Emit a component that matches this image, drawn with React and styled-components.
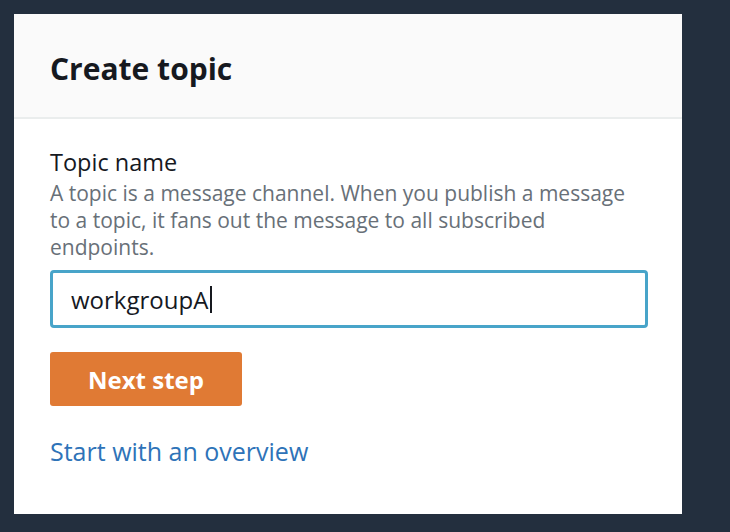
import React from "react"
import styled, { createGlobalStyle } from "styled-components"

const GlobalStyle = createGlobalStyle`
  html, body {
    margin: 0;
    padding: 0;
    background: #232f3e;
  }
  body {
    font-family: "Open Sans", "Liberation Sans", sans-serif;
    -webkit-font-smoothing: antialiased;
  }
`

const Page = styled.div`
  padding: 14px 48px 19px 14px;
`

const Card = styled.section`
  width: 668px;
  background: #ffffff;
  display: flex;
  flex-direction: column;
`

const Header = styled.header`
  height: 105px;
  box-sizing: border-box;
  padding: 5px 36px 0;
  display: flex;
  align-items: center;
  background: #fafafa;
  border-bottom: 2px solid #eaeded;
`

const Title = styled.h1`
  margin: 0;
  font-size: 30px;
  font-weight: 700;
  color: #16191f;
`

const Body = styled.div`
  padding: 28px 36px 48px;
  display: flex;
  flex-direction: column;
  align-items: flex-start;
`

const Label = styled.label`
  font-size: 23.5px;
  line-height: 30px;
  color: #16191f;
`

const Hint = styled.p`
  margin: 3px 0 0;
  font-size: 21px;
  line-height: 27px;
  color: #687078;
  max-width: 584px;
`

const Field = styled.div`
  margin-top: 9px;
  width: 598px;
  height: 58px;
  box-sizing: border-box;
  border: 3px solid #48a4c9;
  border-radius: 4px;
  padding: 0 18px;
  display: flex;
  align-items: center;
  font-size: 24px;
  color: #16191f;
`

const Caret = styled.span`
  display: inline-block;
  width: 2px;
  height: 27px;
  margin-left: 2px;
  background: #16191f;
`

const PrimaryButton = styled.button`
  margin-top: 24px;
  width: 192px;
  height: 54px;
  border: none;
  border-radius: 3px;
  background: #e07a34;
  color: #ffffff;
  font-family: inherit;
  font-size: 24px;
  font-weight: 700;
  cursor: pointer;
`

const Link = styled.a`
  margin-top: 30px;
  font-size: 25px;
  line-height: 30px;
  color: #2e73b8;
  text-decoration: none;
  cursor: pointer;
`

const App = () => (
  <>
    <GlobalStyle />
    <Page>
      <Card>
        <Header>
          <Title>Create topic</Title>
        </Header>
        <Body>
          <Label>Topic name</Label>
          <Hint>
            A topic is a message channel. When you publish a message to a
            topic, it fans out the message to all subscribed endpoints.
          </Hint>
          <Field>
            workgroupA
            <Caret />
          </Field>
          <PrimaryButton>Next step</PrimaryButton>
          <Link>Start with an overview</Link>
        </Body>
      </Card>
    </Page>
  </>
)

export default App
